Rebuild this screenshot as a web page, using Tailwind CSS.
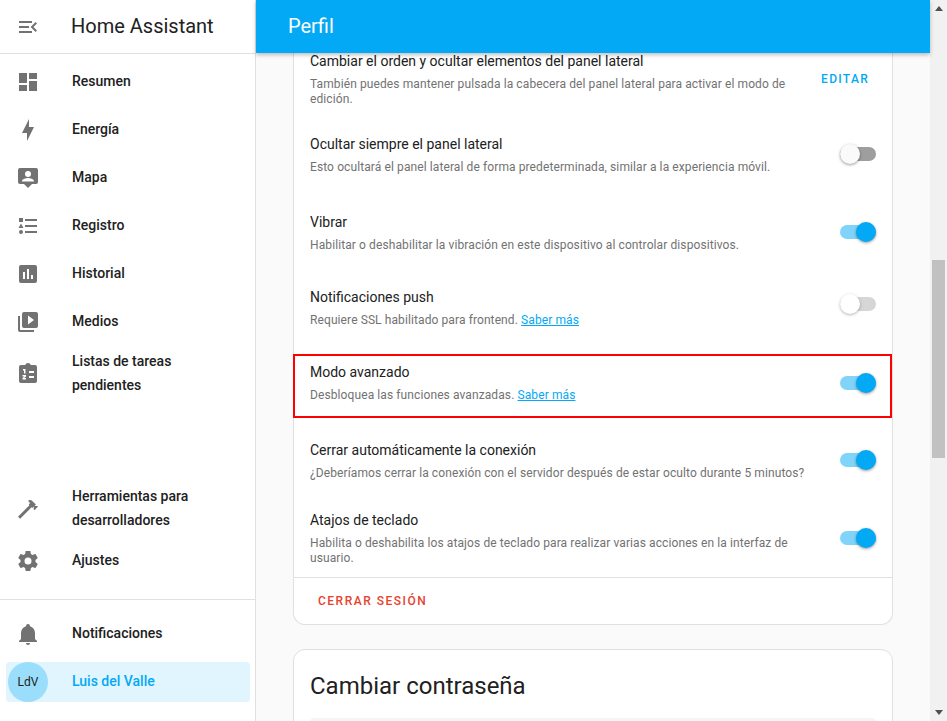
<!DOCTYPE html>
<html lang="es">
<head>
  <meta charset="UTF-8" />
  <title>Perfil - Home Assistant</title>
  <script src="https://cdn.jsdelivr.net/npm/@tailwindcss/browser@4"></script>
</head>
<body class="h-[721px] overflow-hidden bg-[#fafafa] font-['Roboto',sans-serif] text-[#212121]">
  <div class="flex h-[721px]">

    <!-- sidebar -->
    <aside class="flex h-full w-[256px] shrink-0 flex-col border-r border-[#e0e0e0] bg-white">
      <div class="flex h-[54px] shrink-0 items-center border-b border-[#e0e0e0] pl-4">
        <svg class="h-6 w-6 fill-[#727272]" viewBox="0 0 24 24"><path d="M21,15.61L19.59,17L14.58,12L19.59,7L21,8.39L17.44,12L21,15.61M3,6H16V8H3V6M3,13V11H13V13H3M3,18V16H16V18H3Z"/></svg>
        <span class="ml-[31px] pb-[2px] text-[20px]">Home Assistant</span>
      </div>

      <nav class="flex flex-col pt-[4px] text-[14px] font-medium">
        <a class="flex h-12 items-center pl-4">
          <svg class="h-6 w-6 fill-[#727272]" viewBox="0 0 24 24"><path d="M13,3V9H21V3M13,21H21V11H13M3,21H11V15H3M3,13H11V3H3V13Z"/></svg>
          <span class="ml-8 pb-[2px]">Resumen</span>
        </a>
        <a class="flex h-12 items-center pl-4">
          <svg class="h-6 w-6 fill-[#727272]" viewBox="0 0 24 24"><path d="M11 15H6L13 1V9H18L11 23V15Z"/></svg>
          <span class="ml-8 pb-[2px]">Energía</span>
        </a>
        <a class="flex h-12 items-center pl-4">
          <svg class="h-6 w-6 fill-[#727272]" viewBox="0 0 24 24"><path fill-rule="evenodd" d="M4 2H20a2 2 0 0 1 2 2V16a2 2 0 0 1-2 2H16L12 22L8 18H4a2 2 0 0 1-2-2V4a2 2 0 0 1 2-2M12 5a3 3 0 1 0 0 6a3 3 0 1 0 0-6M6 15.5V15c0-2 4-3.1 6-3.1s6 1.1 6 3.1v.5H6Z"/></svg>
          <span class="ml-8 pb-[2px]">Mapa</span>
        </a>
        <a class="flex h-12 items-center pl-4">
          <svg class="h-6 w-6 fill-[#727272]" viewBox="0 0 24 24"><path d="M5,9.5L7.5,14H2.5L5,9.5M3,4H7V8H3V4M5,20A2,2 0 0,0 7,18A2,2 0 0,0 5,16A2,2 0 0,0 3,18A2,2 0 0,0 5,20M9,5V7H21V5H9M9,19H21V17H9V19M9,13H21V11H9V13Z"/></svg>
          <span class="ml-8 pb-[2px]">Registro</span>
        </a>
        <a class="flex h-12 items-center pl-4">
          <svg class="h-6 w-6 fill-[#727272]" viewBox="0 0 24 24"><path d="M9 17H7V10H9V17M13 17H11V7H13V17M17 17H15V13H17V17M19 3H5C3.89 3 3 3.89 3 5V19C3 20.1 3.9 21 5 21H19C20.1 21 21 20.1 21 19V5C21 3.89 20.1 3 19 3Z" fill-rule="evenodd"/></svg>
          <span class="ml-8 pb-[2px]">Historial</span>
        </a>
        <a class="flex h-12 items-center pl-4">
          <svg class="h-6 w-6 fill-[#727272]" viewBox="0 0 24 24"><path d="M4,6H2V20A2,2 0 0,0 4,22H18V20H4V6M20,2H8A2,2 0 0,0 6,4V16A2,2 0 0,0 8,18H20A2,2 0 0,0 22,16V4A2,2 0 0,0 20,2M12,14.5V5.5L18,10L12,14.5Z" fill-rule="evenodd"/></svg>
          <span class="ml-8 pb-[2px]">Medios</span>
        </a>
        <a class="mt-1 flex h-12 items-center pl-4 leading-6">
          <svg class="h-6 w-6 fill-[#727272]" viewBox="0 0 24 24"><path fill-rule="evenodd" d="M19 3H14.82C14.4 1.84 13.3 1 12 1S9.6 1.84 9.18 3H5C3.9 3 3 3.9 3 5V19C3 20.1 3.9 21 5 21H19C20.1 21 21 20.1 21 19V5C21 3.9 20.1 3 19 3M13 9H18V11H13V9M13 14H18V16H13V14M7 7H9.5V11.5H8V8.5H7V7M6.5 13H10V14.6L8.2 16H10V17.5H6.5V16L8.3 14.5H6.5V13Z"/></svg>
          <span class="ml-8 pb-[2px]">Listas de tareas<br />pendientes</span>
        </a>
      </nav>

      <nav class="mt-auto flex flex-col text-[14px] font-medium">
        <a class="flex h-12 items-center pl-4 leading-6">
          <svg class="h-6 w-6 fill-[#727272]" viewBox="0 0 24 24"><path d="M2 19.63L13.43 8.2L12.72 7.5L14.14 6.07L12 3.89C13.2 2.7 15.09 2.7 16.27 3.89L19.87 7.5L18.45 8.91H21.29L22 9.62L18.45 13.21L17.74 12.5V9.62L16.27 11.04L15.56 10.33L4.13 21.76L2 19.63Z"/></svg>
          <span class="ml-8 pb-[2px]">Herramientas para<br />desarrolladores</span>
        </a>
        <a class="mt-[4px] flex h-12 items-center pl-4">
          <svg class="h-6 w-6 fill-[#727272]" viewBox="0 0 24 24"><path d="M12,15.5A3.5,3.5 0 0,1 8.5,12A3.5,3.5 0 0,1 12,8.5A3.5,3.5 0 0,1 15.5,12A3.5,3.5 0 0,1 12,15.5M19.43,12.97C19.47,12.65 19.5,12.33 19.5,12C19.5,11.67 19.47,11.34 19.43,11L21.54,9.37C21.73,9.22 21.78,8.95 21.66,8.73L19.66,5.27C19.54,5.05 19.27,4.96 19.05,5.05L16.56,6.05C16.04,5.66 15.5,5.32 14.87,5.07L14.5,2.42C14.46,2.18 14.25,2 14,2H10C9.75,2 9.54,2.18 9.5,2.42L9.13,5.07C8.5,5.32 7.96,5.66 7.44,6.05L4.95,5.05C4.73,4.96 4.46,5.05 4.34,5.27L2.34,8.73C2.21,8.95 2.27,9.22 2.46,9.37L4.57,11C4.53,11.34 4.5,11.67 4.5,12C4.5,12.33 4.53,12.65 4.57,12.97L2.46,14.63C2.27,14.78 2.21,15.05 2.34,15.27L4.34,18.73C4.46,18.95 4.73,19.03 4.95,18.95L7.44,17.94C7.96,18.34 8.5,18.68 9.13,18.93L9.5,21.58C9.54,21.82 9.75,22 10,22H14C14.25,22 14.46,21.82 14.5,21.58L14.87,18.93C15.5,18.67 16.04,18.34 16.56,17.94L19.05,18.95C19.27,19.03 19.54,18.95 19.66,18.73L21.66,15.27C21.78,15.05 21.73,14.78 21.54,14.63L19.43,12.97Z"/></svg>
          <span class="ml-8 pb-[2px]">Ajustes</span>
        </a>
        <div class="mt-[14px] border-t border-[#e0e0e0] pt-[10px]">
          <a class="flex h-12 items-center pl-4">
            <svg class="h-6 w-6 fill-[#727272]" viewBox="0 0 24 24"><path d="M21,19V20H3V19L5,17V11C5,7.9 7.03,5.17 10,4.29C10,4.19 10,4.1 10,4A2,2 0 0,1 12,2A2,2 0 0,1 14,4C14,4.1 14,4.19 14,4.29C16.97,5.17 19,7.9 19,11V17L21,19M14,21A2,2 0 0,1 12,23A2,2 0 0,1 10,21"/></svg>
            <span class="ml-8 pb-[2px]">Notificaciones</span>
          </a>
          <a class="mt-1 mr-[5px] mb-[19px] ml-[6px] flex h-10 items-center rounded bg-[#03a9f4]/12 text-[#03a9f4]">
            <span class="ml-[2px] flex h-10 w-10 items-center justify-center rounded-full bg-[#9bdefc] text-[12px] font-normal text-[#212121]">LdV</span>
            <span class="ml-[24px] pb-[2px]">Luis del Valle</span>
          </a>
        </div>
      </nav>
    </aside>

    <!-- main -->
    <main class="flex h-full min-w-0 flex-1 flex-col">
      <header class="relative z-10 flex h-[53px] shrink-0 items-center bg-[#03a9f4] pb-[2px] pl-8 text-[20px] text-white shadow-[0_2px_4px_rgba(0,0,0,0.25)]">Perfil</header>

      <div class="flex-1 overflow-hidden px-[37px]">
        <section class="-mt-[10px] w-[600px] rounded-b-xl border border-t-0 border-[#e0e0e0] bg-white">
          <div class="flex h-[73px] items-center pr-[23px] pl-4">
            <div class="w-[480px] pb-px">
              <p class="text-[14px] leading-5">Cambiar el orden y ocultar elementos del panel lateral</p>
              <p class="mt-[6px] text-[12px] leading-[15px] tracking-[0.1px] text-[#727272]">También puedes mantener pulsada la cabecera del panel lateral para activar el modo de edición.</p>
            </div>
            <span class="ml-auto pb-[2px] text-[12px] font-medium tracking-[1.3px] text-[#03a9f4]">EDITAR</span>
          </div>

          <div class="flex h-[78px] items-center pr-4 pl-4">
            <div class="pb-px">
              <p class="text-[14px] leading-5">Ocultar siempre el panel lateral</p>
              <p class="mt-[6px] text-[12px] leading-[15px] tracking-[0.1px] text-[#727272]">Esto ocultará el panel lateral de forma predeterminada, similar a la experiencia móvil.</p>
            </div>
            <span class="relative mb-[2px] ml-auto h-[14px] w-9 rounded-full bg-[#9e9e9e]"><i class="absolute -top-[3px] left-0 h-5 w-5 rounded-full bg-[#fafafa] shadow-[0_1px_3px_rgba(0,0,0,0.4)]"></i></span>
          </div>

          <div class="flex h-[78px] items-center pr-4 pl-4">
            <div class="pb-px">
              <p class="text-[14px] leading-5">Vibrar</p>
              <p class="mt-[6px] text-[12px] leading-[15px] tracking-[0.1px] text-[#727272]">Habilitar o deshabilitar la vibración en este dispositivo al controlar dispositivos.</p>
            </div>
            <span class="relative mb-[2px] ml-auto h-[14px] w-9 rounded-full bg-[#03a9f4]/50"><i class="absolute -top-[3px] right-0 h-5 w-5 rounded-full bg-[#03a9f4] shadow-[0_1px_3px_rgba(0,0,0,0.4)]"></i></span>
          </div>

          <div class="flex h-[75px] items-center pr-4 pl-4">
            <div class="pb-[5px]">
              <p class="text-[14px] leading-5">Notificaciones push</p>
              <p class="mt-[6px] text-[12px] leading-[15px] tracking-[0.1px] text-[#727272]">Requiere SSL habilitado para frontend. <a class="text-[#03a9f4] underline">Saber más</a></p>
            </div>
            <span class="relative mb-[12px] ml-auto h-[14px] w-9 rounded-full bg-[#d6d6d6]"><i class="absolute -top-[3px] left-0 h-5 w-5 rounded-full bg-white shadow-[0_1px_3px_rgba(0,0,0,0.3)]"></i></span>
          </div>

          <div class="flex h-[75px] items-center pr-4 pl-4">
            <div class="pb-[5px]">
              <p class="text-[14px] leading-5">Modo avanzado</p>
              <p class="mt-[6px] text-[12px] leading-[15px] tracking-[0.1px] text-[#727272]">Desbloquea las funciones avanzadas. <a class="text-[#03a9f4] underline">Saber más</a></p>
            </div>
            <span class="relative mb-[4px] ml-auto h-[14px] w-9 rounded-full bg-[#03a9f4]/50"><i class="absolute -top-[3px] right-0 h-5 w-5 rounded-full bg-[#03a9f4] shadow-[0_1px_3px_rgba(0,0,0,0.4)]"></i></span>
          </div>

          <div class="flex h-[78px] items-center pr-4 pl-4">
            <div class="pb-px">
              <p class="text-[14px] leading-5">Cerrar automáticamente la conexión</p>
              <p class="mt-[6px] text-[12px] leading-[15px] tracking-[0.1px] text-[#727272]">¿Deberíamos cerrar la conexión con el servidor después de estar oculto durante 5 minutos?</p>
            </div>
            <span class="relative mb-[2px] ml-auto h-[14px] w-9 rounded-full bg-[#03a9f4]/50"><i class="absolute -top-[3px] right-0 h-5 w-5 rounded-full bg-[#03a9f4] shadow-[0_1px_3px_rgba(0,0,0,0.4)]"></i></span>
          </div>

          <div class="flex h-[77px] items-center pr-4 pb-px pl-4">
            <div class="w-[500px] pb-px">
              <p class="text-[14px] leading-5">Atajos de teclado</p>
              <p class="mt-[6px] text-[12px] leading-[15px] tracking-[0.1px] text-[#727272]">Habilita o deshabilita los atajos de teclado para realizar varias acciones en la interfaz de usuario.</p>
            </div>
            <span class="relative ml-auto h-[14px] w-9 rounded-full bg-[#03a9f4]/50"><i class="absolute -top-[3px] right-0 h-5 w-5 rounded-full bg-[#03a9f4] shadow-[0_1px_3px_rgba(0,0,0,0.4)]"></i></span>
          </div>

          <div class="flex h-[47px] items-center border-t border-[#e0e0e0] pl-6 text-[12px] font-medium tracking-[1.5px] text-[#e8422f]">CERRAR SESIÓN</div>
        </section>

        <section class="mt-6 h-[200px] w-[600px] rounded-xl border border-[#e0e0e0] bg-white px-4 pt-5">
          <h2 class="text-[24px] leading-8">Cambiar contraseña</h2>
          <div class="mt-4 h-14 w-full rounded-t bg-[#f5f5f5]"></div>
        </section>
      </div>
    </main>

    <!-- scrollbar -->
    <div class="relative flex h-full w-[17px] shrink-0 flex-col items-center justify-between bg-[#f1f1f1] py-[6px]">
      <span class="h-0 w-0 border-x-4 border-b-[5px] border-x-transparent border-b-[#505050]"></span>
      <span class="absolute top-[260px] left-[2px] h-[198px] w-[13px] bg-[#c1c1c1]"></span>
      <span class="h-0 w-0 border-x-4 border-t-[5px] border-x-transparent border-t-[#505050]"></span>
    </div>
  </div>

  <!-- annotation from the screenshot -->
  <div class="absolute top-[354px] left-[293px] h-[64px] w-[599px] border-2 border-[#ff0000]"></div>
</body>
</html>
